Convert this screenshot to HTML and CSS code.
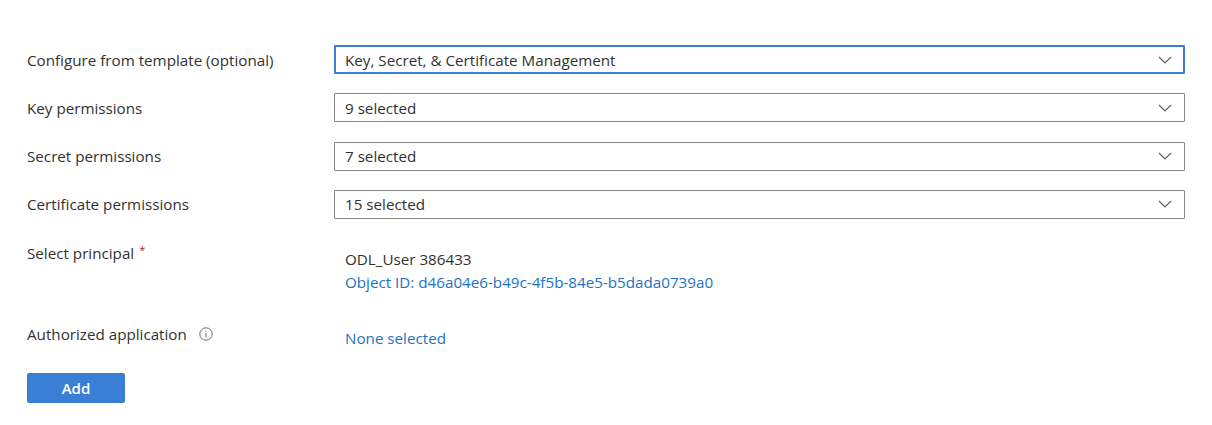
FILE: index.html
```html
<!DOCTYPE html>
<html>
<head>
<meta charset="utf-8">
<link rel="stylesheet" href="styles.css">
</head>
<body>
<div class="form">
  <div class="row">
    <div class="label">Configure from template (optional)</div>
    <div class="field">
      <div class="select focused">
        <span>Key, Secret, &amp; Certificate Management</span>
        <svg class="chev" width="14" height="8" viewBox="0 0 14 8"><path d="M1 1l6 6 6-6" fill="none" stroke="#605e5c" stroke-width="1.2"/></svg>
      </div>
    </div>
  </div>
  <div class="row">
    <div class="label">Key permissions</div>
    <div class="field">
      <div class="select">
        <span>9 selected</span>
        <svg class="chev" width="14" height="8" viewBox="0 0 14 8"><path d="M1 1l6 6 6-6" fill="none" stroke="#605e5c" stroke-width="1.2"/></svg>
      </div>
    </div>
  </div>
  <div class="row">
    <div class="label">Secret permissions</div>
    <div class="field">
      <div class="select">
        <span>7 selected</span>
        <svg class="chev" width="14" height="8" viewBox="0 0 14 8"><path d="M1 1l6 6 6-6" fill="none" stroke="#605e5c" stroke-width="1.2"/></svg>
      </div>
    </div>
  </div>
  <div class="row">
    <div class="label">Certificate permissions</div>
    <div class="field">
      <div class="select">
        <span>15 selected</span>
        <svg class="chev" width="14" height="8" viewBox="0 0 14 8"><path d="M1 1l6 6 6-6" fill="none" stroke="#605e5c" stroke-width="1.2"/></svg>
      </div>
    </div>
  </div>
  <div class="row principal">
    <div class="label">Select principal<span class="req">*</span></div>
    <div class="field info">
      <div class="name">ODL_User 386433</div>
      <a class="link">Object ID: d46a04e6-b49c-4f5b-84e5-b5dada0739a0</a>
    </div>
  </div>
  <div class="row app">
    <div class="label">Authorized application
      <svg class="infoicon" width="14" height="14" viewBox="0 0 14 14"><circle cx="7" cy="7" r="6.2" fill="none" stroke="#605e5c" stroke-width="0.9"/><rect x="6.5" y="6" width="1" height="4.2" fill="#605e5c"/><circle cx="7" cy="4.3" r="0.6" fill="#605e5c"/></svg>
    </div>
    <div class="field info">
      <a class="link">None selected</a>
    </div>
  </div>
  <button class="add">Add</button>
</div>
</body>
</html>
```

FILE: styles.css
```css
* { box-sizing: border-box; }
html, body { margin: 0; padding: 0; background: #fff; }
body {
  font-family: "Open Sans", "Noto Sans", sans-serif;
  font-size: 15.2px;
  color: #323130;
}
.form {
  padding: 45px 27px 0 27px;
}
.row {
  display: flex;
  align-items: center;
  height: 29px;
  margin-bottom: 19.3px;
}
.label {
  width: 307px;
  flex: none;
  display: flex;
  align-items: center;
  line-height: 20px;
}
.field {
  flex: 1;
}
.select {
  height: 29px;
  border: 1px solid #8a8886;
  border-radius: 1px;
  display: flex;
  align-items: center;
  justify-content: space-between;
  padding: 0 12px 0 10px;
}
.select.focused {
  border: 2px solid #3b7fd6;
  padding-left: 9px;
  padding-right: 11px;
}
.chev { display: block; }
.req {
  color: #a4262c;
  margin-left: 5px;
  font-size: 11px;
  line-height: 11px;
  align-self: flex-start;
  margin-top: 1px;
}
.row.principal {
  height: auto;
  align-items: flex-start;
  margin-top: 24px;
  margin-bottom: 29.5px;
}
.row.principal, .row.app { margin-top: 0; }
.row:nth-child(4) { margin-bottom: 24px; }
.info { padding-left: 11px; }
.principal .info { padding-top: 5.5px; }
.name { line-height: 23px; }
.link { color: #1a73c8; line-height: 23px; display: block; text-decoration: none; }
.app .link { line-height: 20px; }
.row.app {
  height: auto;
  align-items: flex-start;
  margin-bottom: 25px;
}
.app .info { padding-top: 4px; }
.infoicon { margin-left: 12px; }
.add {
  display: block;
  width: 98px;
  height: 30px;
  border: none;
  border-radius: 2px;
  background: #3a7fd5;
  color: #fff;
  font-family: "Open Sans", "Noto Sans", sans-serif;
  font-weight: 600;
  font-size: 15px;
  padding: 0;
}
```
